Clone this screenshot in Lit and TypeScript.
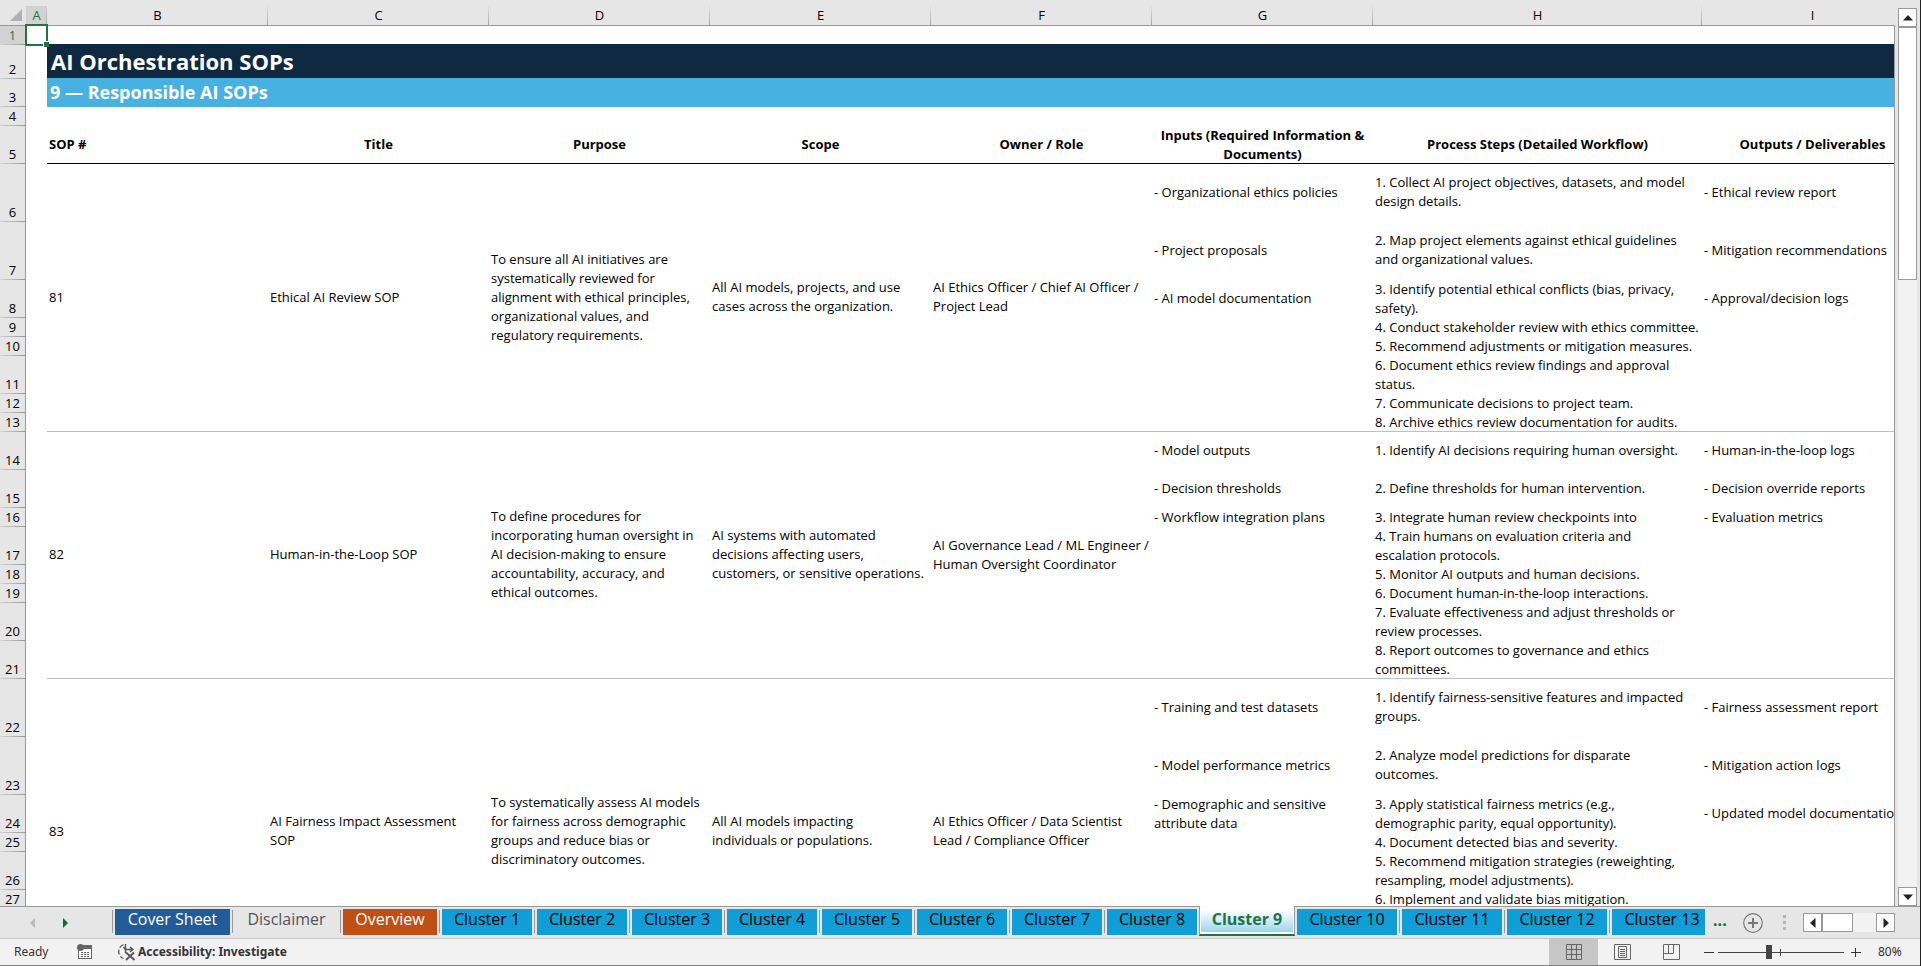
import { LitElement, html, css, svg, nothing } from "lit";
import { customElement, state } from "lit/decorators.js";
import { classMap } from "lit/directives/class-map.js";

interface Sop {
  id: string;
  title: string;
  purpose: string;
  scope: string;
  owner: string;
  rows: [number, string, string, string][];
}

const COLUMNS = ["A", "B", "C", "D", "E", "F", "G", "H", "I"];

const HEADINGS = [
  "Title",
  "Purpose",
  "Scope",
  "Owner / Role",
  "Inputs (Required Information &\nDocuments)",
  "Process Steps (Detailed Workflow)",
  "Outputs / Deliverables",
];

// Each entry in rows: line count of the row, inputs, process step, outputs.
const SOPS: Sop[] = [
  {
    id: "81",
    title: "Ethical AI Review SOP",
    purpose:
      "To ensure all AI initiatives are\nsystematically reviewed for\nalignment with ethical principles,\norganizational values, and\nregulatory requirements.",
    scope: "All AI models, projects, and use\ncases across the organization.",
    owner: "AI Ethics Officer / Chief AI Officer /\nProject Lead",
    rows: [
      [3, "- Organizational ethics policies", "1. Collect AI project objectives, datasets, and model\ndesign details.", "- Ethical review report"],
      [3, "- Project proposals", "2. Map project elements against ethical guidelines\nand organizational values.", "- Mitigation recommendations"],
      [2, "- AI model documentation", "3. Identify potential ethical conflicts (bias, privacy,\nsafety).", "- Approval/decision logs"],
      [1, "", "4. Conduct stakeholder review with ethics committee.", ""],
      [1, "", "5. Recommend adjustments or mitigation measures.", ""],
      [2, "", "6. Document ethics review findings and approval\nstatus.", ""],
      [1, "", "7. Communicate decisions to project team.", ""],
      [1, "", "8. Archive ethics review documentation for audits.", ""],
    ],
  },
  {
    id: "82",
    title: "Human-in-the-Loop SOP",
    purpose:
      "To define procedures for\nincorporating human oversight in\nAI decision-making to ensure\naccountability, accuracy, and\nethical outcomes.",
    scope: "AI systems with automated\ndecisions affecting users,\ncustomers, or sensitive operations.",
    owner: "AI Governance Lead / ML Engineer /\nHuman Oversight Coordinator",
    rows: [
      [2, "- Model outputs", "1. Identify AI decisions requiring human oversight.", "- Human-in-the-loop logs"],
      [2, "- Decision thresholds", "2. Define thresholds for human intervention.", "- Decision override reports"],
      [1, "- Workflow integration plans", "3. Integrate human review checkpoints into", "- Evaluation metrics"],
      [2, "", "4. Train humans on evaluation criteria and\nescalation protocols.", ""],
      [1, "", "5. Monitor AI outputs and human decisions.", ""],
      [1, "", "6. Document human-in-the-loop interactions.", ""],
      [2, "", "7. Evaluate effectiveness and adjust thresholds or\nreview processes.", ""],
      [2, "", "8. Report outcomes to governance and ethics\ncommittees.", ""],
    ],
  },
  {
    id: "83",
    title: "AI Fairness Impact Assessment\nSOP",
    purpose:
      "To systematically assess AI models\nfor fairness across demographic\ngroups and reduce bias or\ndiscriminatory outcomes.",
    scope: "All AI models impacting\nindividuals or populations.",
    owner: "AI Ethics Officer / Data Scientist\nLead / Compliance Officer",
    rows: [
      [3, "- Training and test datasets", "1. Identify fairness-sensitive features and impacted\ngroups.", "- Fairness assessment report"],
      [3, "- Model performance metrics", "2. Analyze model predictions for disparate\noutcomes.", "- Mitigation action logs"],
      [2, "- Demographic and sensitive\nattribute data", "3. Apply statistical fairness metrics (e.g.,\ndemographic parity, equal opportunity).", "- Updated model documentation"],
      [1, "", "4. Document detected bias and severity.", ""],
      [2, "", "5. Recommend mitigation strategies (reweighting,\nresampling, model adjustments).", ""],
      [1, "", "6. Implement and validate bias mitigation.", ""],
      [2, "", "", ""],
      [2, "", "", ""],
    ],
  },
];

@customElement("sheet-grid")
class SheetGrid extends LitElement {
  static styles = css`
    :host { display: block; overflow: hidden; background: #fff; }
    table {
      table-layout: fixed; border-collapse: separate; border-spacing: 0; width: 1923px;
      font: 13px/19px "Open Sans", "Noto Sans", sans-serif; color: #000;
    }
    .c-head { width: 26px; }
    .c-a { width: 21px; }
    .c-std { width: 221px; }
    .c-wide { width: 329px; }
    th, td { padding: 0; box-sizing: border-box; white-space: pre; }
    thead th {
      height: 26px; padding-top: 6px; font-weight: 400; background: #e6e6e6;
      border-bottom: 1px solid #999;
    }
    thead th:not(:first-child) {
      background: linear-gradient(#e0e0e0, #a6a6a6) right 6px / 1px 19px no-repeat #e6e6e6;
    }
    thead th.on:not(:first-child) {
      color: #217346;
      background: linear-gradient(#d2d2d2, #a6a6a6) right 6px / 1px 19px no-repeat,
        linear-gradient(#d2d2d2, #d2d2d2) 0 6px / 100% 19px no-repeat #e6e6e6;
      border-bottom-color: #217346;
    }
    .corner { padding: 4px 4px 0 0; text-align: right; line-height: 0; }
    tbody th.num {
      font-weight: 400; vertical-align: bottom; text-align: center;
      border-right: 1px solid #999;
      background: linear-gradient(90deg, #d2d2d2, #999) 0 100% / 100% 1px no-repeat #e6e6e6;
    }
    tbody th.num.on { background-color: #d2d2d2; color: #217346; }
    .h1 { height: 19px; }
    .h2 { height: 38px; }
    .h3 { height: 58px; }
    .h-title { height: 34px; }
    .h-sub { height: 28px; }
    td { padding: 0 2px; vertical-align: middle; }
    .banner {
      background: #0f2941; color: #fff; font-size: 22px; line-height: 30px; font-weight: 700;
      padding-left: 4px; box-shadow: 0 -1px 0 #0f2941;
    }
    .banner.sub {
      background: #47b2e1; font-size: 18px; line-height: 24px; padding-left: 3px;
      box-shadow: 0 -1px 0 #47b2e1;
    }
    .field { text-align: center; font-weight: 700; box-shadow: inset 0 -1px 0 #000; vertical-align: middle; }
    .field.first { text-align: left; padding-left: 2px; }
    .end { box-shadow: inset 0 -1px 0 #bfbfbf; }
    .roomy { padding-bottom: 2px; }
    .a1 { position: relative; }
    .cursor { position: absolute; inset: -2px -1px -1px -1px; border: 2px solid #217346; }
    .cursor::after {
      content: ""; position: absolute; right: -3px; bottom: -3px; width: 5px; height: 5px;
      background: #217346; border: solid #fff; border-width: 1px 0 0 1px;
    }
  `;

  // Cells with fewer text lines than their row holds keep a small bottom inset.
  private cell(text: string, lines: number, last: boolean) {
    const roomy = text.split("\n").length < lines;
    return html`<td class=${classMap({ end: last, roomy })}>${text}</td>`;
  }

  render() {
    let n = 5;
    return html`<table>
      <colgroup>
        <col class="c-head" /><col class="c-a" />
        ${COLUMNS.slice(1).map((c) => html`<col class=${c === "H" ? "c-wide" : "c-std"} />`)}
      </colgroup>
      <thead>
        <tr>
          <th class="corner"><svg width="12" height="12"><path d="M12 0V12H0Z" fill="#b1b1b1" /></svg></th>
          ${COLUMNS.map((c) => html`<th scope="col" class=${classMap({ on: c === "A" })}>${c}</th>`)}
        </tr>
      </thead>
      <tbody>
        <tr class="h1"><th class="num on">1</th><td class="a1"><div class="cursor"></div></td><td colspan="8"></td></tr>
        <tr class="h-title"><th class="num">2</th><td></td><td class="banner roomy" colspan="8">AI Orchestration SOPs</td></tr>
        <tr class="h-sub"><th class="num">3</th><td></td><td class="banner sub roomy" colspan="8">9 — Responsible AI SOPs</td></tr>
        <tr class="h1"><th class="num">4</th><td colspan="9"></td></tr>
        <tr class="h2">
          <th class="num">5</th><td></td>
          <th class="field first roomy">SOP #</th>
          ${HEADINGS.map((h) => html`<th class=${classMap({ field: true, roomy: !h.includes("\n") })}>${h}</th>`)}
        </tr>
        ${SOPS.map((s) =>
          s.rows.map(([lines, input, step, output], i) => {
            const last = i === s.rows.length - 1;
            n += 1;
            return html`<tr class="h${lines}">
              <th class="num">${n}</th><td></td>
              ${i === 0
                ? [s.id, s.title, s.purpose, s.scope, s.owner].map(
                    (t) => html`<td class="end roomy" rowspan=${s.rows.length}>${t}</td>`)
                : nothing}
              ${[input, step, output].map((t) => this.cell(t, lines, last))}
            </tr>`;
          })
        )}
      </tbody>
    </table>`;
  }
}

const arrow = (d: string, size = 10) =>
  svg`<svg width=${size} height=${size} viewBox="0 0 10 10"><path d=${d} fill="currentColor"/></svg>`;

@customElement("scroll-strip")
class ScrollStrip extends LitElement {
  static properties = { vertical: { type: Boolean, reflect: true }, size: { type: Number } };
  declare vertical: boolean;
  declare size: number;
  static styles = css`
    :host { display: flex; background: #f2f2f2; }
    :host([vertical]) { flex-direction: column; }
    button {
      flex: none; width: 19px; height: 19px; padding: 0; margin: 0; box-sizing: border-box;
      border: 1px solid #999; background: #fff; color: #222;
      display: flex; align-items: center; justify-content: center;
    }
    .track { flex: 1; display: flex; min-width: 0; min-height: 0; }
    :host([vertical]) .track { flex-direction: column; }
    .thumb { box-sizing: border-box; border: 1px solid #999; background: #fff; }
  `;
  render() {
    return this.vertical
      ? html`<button aria-label="Scroll up">${arrow("M5 2 10 7.5H0Z")}</button>
          <div class="track"><div class="thumb" style="height:${this.size}%"></div></div>
          <button aria-label="Scroll down">${arrow("M5 8 10 2.500H0Z")}</button>`
      : html`<button aria-label="Scroll left">${arrow("M2 5 7.500 0V10Z")}</button>
          <div class="track"><div class="thumb" style="width:${this.size}%"></div></div>
          <button aria-label="Scroll right">${arrow("M8 5 2.500 0V10Z")}</button>`;
  }
}

interface Tab { name: string; tone: string; }
const TABS: Tab[] = [
  { name: "Cover Sheet", tone: "navy" },
  { name: "Disclaimer", tone: "plain" },
  { name: "Overview", tone: "orange" },
  ...Array.from({ length: 13 }, (_, i) => ({
    name: `Cluster ${i + 1}`,
    tone: i < 9 ? "blue" : "blue wide",
  })),
];

@customElement("sheet-tabs")
class SheetTabs extends LitElement {
  @state() active = "Cluster 9";
  static styles = css`
    :host {
      display: flex; height: 32px; box-sizing: border-box; background: #e6e6e6;
      border-top: 1px solid #999; font: 16px/20px "Open Sans", "Noto Sans", sans-serif;
    }
    button { border: 0; background: none; padding: 0; margin: 0; font: inherit; }
    svg { display: block; }
    .nav { display: flex; align-items: center; width: 112px; box-sizing: border-box; padding-left: 28px; gap: 22px; flex: none; }
    .prev { color: #bbb; }
    .next { color: #0e6b38; }
    .tabs { display: flex; flex: 1; min-width: 0; overflow-x: clip; }
    .tab { display: flex; flex: none; }
    .tab::before { content: ""; width: 1px; margin: 3px 2px 5px 0; background: #999; }
    .label {
      height: 26px; box-sizing: border-box; min-width: 90px; margin: 2px 2px 0 0;
      padding: 0 0 6px; color: #000; white-space: nowrap; text-align: center;
    }
    .navy .label { background: #215c98; color: #fff; min-width: 115px; }
    .orange .label { background: #c04f15; color: #fff; min-width: 94px; }
    .blue .label { background: #0f9ed5; }
    .wide .label { min-width: 100px; }
    .plain .label { color: #555; min-width: 103px; }
    .active { margin-top: -1px; height: 30px; box-sizing: border-box; background: #fff; border: solid #999; border-width: 0 1px; border-bottom: 2px solid #217346; }
    .active::before { display: none; }
    .active .label {
      margin: 4px 1px 2px; height: 22px; min-width: 92px; padding: 0 0 4px; line-height: 18px; font-weight: 700;
      color: #217346; background: linear-gradient(#fff, #9bd5ee);
    }
    .active + .tab::before { background: none; width: 0; }
    .rest { display: flex; align-items: center; flex: none; width: 215px; }
    .more { color: #0e6b38; font-weight: 700; padding: 0 0 6px; margin-left: 8px; }
    .add { margin-left: 16px; color: #777; }
    .grip { display: grid; gap: 3px; align-content: center; margin-left: 20px; }
    .grip i { width: 3px; height: 3px; background: #b4b4b4; }
    scroll-strip { width: 92px; margin: 0 25px 0 auto; flex: none; }
  `;
  render() {
    return html`
      <div class="nav">
        <button class="prev" aria-label="Previous sheets">${arrow("M2 5 7 0V10Z")}</button>
        <button class="next" aria-label="Next sheets">${arrow("M8 5 3 0V10Z")}</button>
      </div>
      <div class="tabs" role="tablist">
        ${TABS.map(
          (t) => html`<div class="tab ${t.tone} ${t.name === this.active ? "active" : ""}">
            <button class="label" role="tab" aria-selected=${t.name === this.active}
              @click=${() => (this.active = t.name)}>${t.name}</button>
          </div>`
        )}
      </div>
      <div class="rest">
        <button class="more" aria-label="More sheets">...</button>
        <button class="add" aria-label="New sheet">
          <svg width="20" height="20" viewBox="0 0 20 20" fill="none" stroke="currentColor">
            <circle cx="10" cy="10" r="9.3" stroke-width="1.200" /><path d="M10 5v10M5 10h10" stroke-width="2" />
          </svg>
        </button>
        <span class="grip"><i></i><i></i><i></i></span>
        <scroll-strip size="57"></scroll-strip>
      </div>`;
  }
}

@customElement("status-bar")
class StatusBar extends LitElement {
  static styles = css`
    :host {
      display: flex; align-items: stretch; height: 28px; box-sizing: border-box; background: #f2f2f2;
      border-top: 1px solid #c6c6c6; border-bottom: 1px solid #808080;
      font: 12px/16px "Noto Sans", "Open Sans", sans-serif; color: #333;
    }
    button { border: 0; background: none; padding: 0; margin: 0; font: inherit; color: inherit; display: flex; align-items: center; justify-content: center; }
    .ready { align-self: center; padding-left: 14px; width: 77px; box-sizing: border-box; }
    .access { margin-left: 24px; gap: 2px; font-weight: 700; }
    .views { display: flex; margin-left: auto; color: #666; }
    .views button { width: 49px; }
    .views .on { background: #c6c6c6; }
    .zoom { display: flex; align-items: center; margin-left: 5px; }
    .step { width: 16px; height: 26px; }
    input {
      appearance: none; width: 126px; height: 14px; margin: 0 4px 0 1px;
      background:
        linear-gradient(#444, #444) 62px 50% / 1px 7px no-repeat,
        linear-gradient(#444, #444) 0 50% / 100% 1px no-repeat;
    }
    input::-webkit-slider-thumb { appearance: none; width: 6px; height: 14px; background: #444; border-radius: 0; }
    .pct { width: 56px; padding-left: 14px; box-sizing: border-box; }
  `;
  render() {
    return html`
      <span class="ready">Ready</span>
      <button aria-label="Macro recording">
        <svg width="16" height="16" viewBox="0 0 16 16">
          <rect x="1.500" y="3.500" width="13" height="11" fill="#fff" stroke="#666" />
          <path d="M6 1h9v4H6z" fill="#666" />
          <circle cx="3.500" cy="3.500" r="3.500" fill="#666" />
          <path d="M4 8.500h2m1 0h2m1 0h2M4 10.500h2m1 0h2m1 0h2M4 12.500h2m1 0h2m1 0h2" stroke="#666" />
        </svg>
      </button>
      <button class="access">
        <svg width="19" height="18" viewBox="0 0 19 18" fill="none" stroke="#555">
          <path d="M6.500 1.500A7.500 7.500 0 0 0 6.500 15.500" stroke-dasharray="5 2" stroke-width="1.300" />
          <path d="M8.500 1v5.500H15M6.500 4 8.500 6.500V10M13 4l3 2.500-3 2.500" stroke-width="1.400" />
          <path d="M9 9.500 17.500 17M17 9.500 9 17" stroke-width="1.900" />
        </svg>
        Accessibility: Investigate
      </button>
      <div class="views">
        <button class="on" aria-label="Normal view">
          <svg width="16" height="16" fill="none" stroke="currentColor"><path d="M.5.5h15v15H.5zM5.500.5v15M10.500.5v15M.5 5.500h15M.5 10.500h15" /></svg>
        </button>
        <button aria-label="Page layout view">
          <svg width="17" height="16" fill="none" stroke="currentColor"><path d="M.5.5h16v15H.5zM4.500 2.500h8v11h-8zM6 5.500h5M6 7.500h5M6 9.500h5M6 11.500h5" /></svg>
        </button>
        <button aria-label="Page break preview">
          <svg width="17" height="16" fill="none" stroke="currentColor"><path d="M.5.5h16v15H.5zM.5 9.500h10V.5M5.500.5v9" /></svg>
        </button>
      </div>
      <div class="zoom">
        <button class="step" aria-label="Zoom out"><svg width="10" height="10" stroke="#333"><path d="M0 5.500h10" /></svg></button>
        <input type="range" min="0" max="100" value="40" aria-label="Zoom" aria-valuetext="80%" />
        <button class="step" aria-label="Zoom in"><svg width="10" height="10" stroke="#333"><path d="M0 5.500h10M4.500 1v9" /></svg></button>
        <span class="pct">80%</span>
      </div>`;
  }
}

@customElement("app-root")
class AppRoot extends LitElement {
  static styles = css`
    :host {
      display: flex; flex-direction: column; height: 100vh; box-sizing: border-box;
      overflow: hidden; background: #e6e6e6; border-right: 1px solid #222;
    }
    .main { flex: 1; display: flex; min-height: 0; }
    sheet-grid { flex: 1; min-width: 0; }
    .side {
      display: flex; box-sizing: border-box; width: 26px; padding: 8px 3px 0 4px;
      background: linear-gradient(#999, #999) 0 25px / 1px 100% no-repeat #e6e6e6;
    }
    scroll-strip { flex: 1; }
  `;
  render() {
    return html`
      <div class="main">
        <sheet-grid></sheet-grid>
        <div class="side"><scroll-strip vertical size="29.4"></scroll-strip></div>
      </div>
      <sheet-tabs></sheet-tabs>
      <status-bar></status-bar>`;
  }
}
